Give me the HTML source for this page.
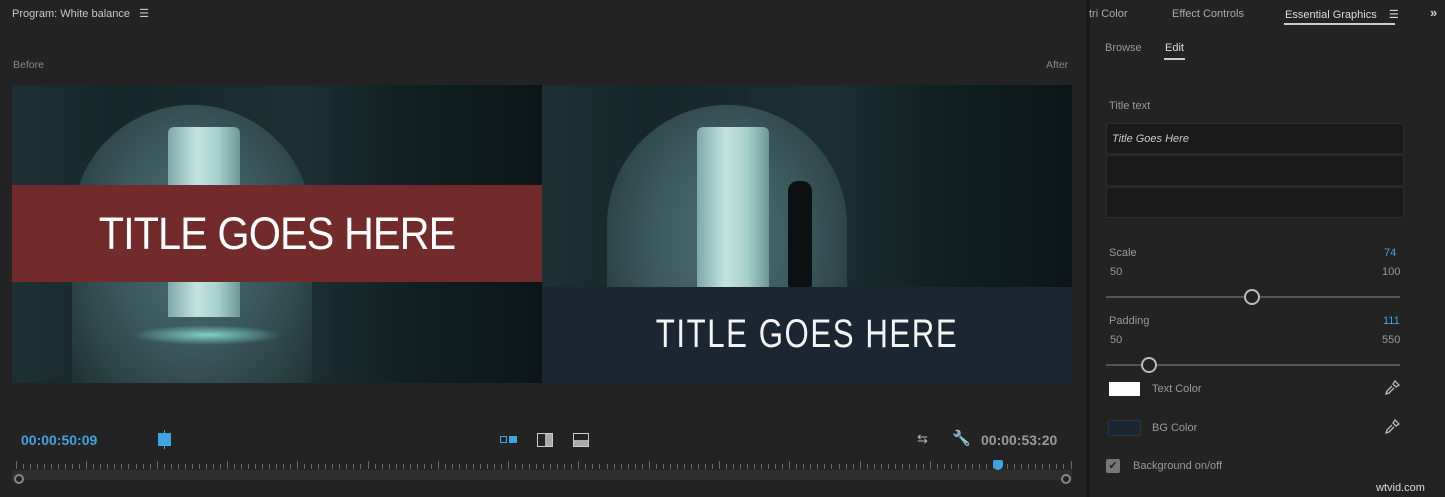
<!DOCTYPE html>
<html><head><style>
*{margin:0;padding:0;box-sizing:border-box}
body{width:1445px;height:497px;background:#232323;font-family:"Liberation Sans",sans-serif;color:#aaa;position:relative;overflow:hidden;font-size:12px}
.a{position:absolute}
.cave{position:absolute;top:85px;height:298px;width:530px;overflow:hidden;background:linear-gradient(90deg,#1d3033 0%,#16272a 20%,#1c2f32 55%,#112022 75%,#0c1618 100%)}
.arch{position:absolute;border-radius:50% 50% 0 0/40% 40% 0 0;background:radial-gradient(ellipse at 50% 45%,#4f6e72 0%,#3e5c60 40%,#2a4245 75%,rgba(28,47,50,0) 100%)}
.pillar{position:absolute;background:linear-gradient(90deg,#7fa9a9,#c5e3e0 40%,#a6d0cc 70%,#6d9796);border-radius:6px 6px 0 0}
.tk{position:absolute;top:0;width:1px;background:#666}
</style></head><body>
<div class="a" style="left:12px;top:7px;font-size:11px;color:#c8c8c8">Program: White balance&nbsp;&nbsp; ☰</div>
<div class="a" style="left:13px;top:59px;font-size:10.5px;color:#8a8a8a">Before</div>
<div class="a" style="left:1046px;top:59px;font-size:10.5px;color:#8a8a8a">After</div>

<div class="cave" style="left:12px">
  <div class="arch" style="left:60px;top:20px;width:240px;height:300px"></div>
  <div class="pillar" style="left:156px;top:42px;width:72px;height:190px"></div>
  <div class="a" style="left:120px;top:240px;width:150px;height:20px;border-radius:50%;background:radial-gradient(ellipse,#7fd0c8,rgba(60,120,140,0) 70%)"></div>
  <div class="a" style="left:0;top:100px;width:530px;height:97px;background:#722a2a"></div>
  <div class="a" style="left:-20px;top:123px;width:570px;text-align:center;font-size:45px;color:#fff;letter-spacing:-1px;transform:scaleX(0.92)">TITLE GOES HERE</div>
</div>
<div class="cave" style="left:542px;width:530px">
  <div class="arch" style="left:65px;top:20px;width:240px;height:300px"></div>
  <div class="pillar" style="left:155px;top:42px;width:72px;height:162px"></div>
  <div class="a" style="left:246px;top:96px;width:24px;height:106px;background:#0b1012;border-radius:10px 10px 2px 2px"></div>
  <div class="a" style="left:0;top:202px;width:530px;height:96px;background:#1b2632"></div>
  <div class="a" style="left:-20px;top:227px;width:570px;text-align:center;font-size:40px;color:#f4f4f4;letter-spacing:2px;transform:scaleX(0.78)">TITLE GOES HERE</div>
</div>

<div class="a" style="left:21px;top:432px;font-size:14px;font-weight:bold;color:#3fa4e0">00:00:50:09</div>
<div class="a" style="left:158px;top:433px;width:13px;height:13px;background:#3fa4e0"></div>
<div class="a" style="left:164px;top:430px;width:1px;height:19px;background:#3fa4e0"></div>
<div class="a" style="left:500px;top:436px;width:7px;height:7px;border:1px solid #3fa4e0"></div>
<div class="a" style="left:509px;top:436px;width:8px;height:7px;background:#3fa4e0"></div>
<div class="a" style="left:537px;top:433px;width:16px;height:14px;border:1px solid #ccc;background:linear-gradient(90deg,transparent 50%,#aaa 50%)"></div>
<div class="a" style="left:573px;top:433px;width:16px;height:14px;border:1px solid #ccc;background:linear-gradient(180deg,transparent 50%,#aaa 50%)"></div>
<div class="a" style="left:917px;top:431px;font-size:13px;color:#bbb">⇆</div>
<div class="a" style="left:952px;top:429px;font-size:15px;color:#ccc">🔧</div>
<div class="a" style="left:981px;top:432px;font-size:14px;font-weight:bold;color:#999">00:00:53:20</div>
<div class="a" style="left:12px;top:470px;width:1060px;height:10px;background:#2e2e2e"></div>
<div class="a" style="left:14px;top:474px;width:10px;height:10px;border:2px solid #888;border-radius:50%;background:#232323"></div>
<div class="a" style="left:1061px;top:474px;width:10px;height:10px;border:2px solid #888;border-radius:50%;background:#232323"></div>
<div id="ticks"></div>
<div class="a" style="left:993px;top:460px;width:10px;height:10px;background:#3fa4e0;border-radius:2px 2px 5px 5px"></div>

<div class="a" style="left:1086px;top:0;width:4px;height:497px;background:#1a1a1a"></div>
<div class="a" style="left:1089px;top:8px;font-size:11px;color:#aaa">tri Color</div>
<div class="a" style="left:1172px;top:8px;font-size:11px;color:#aaa">Effect Controls</div>
<div class="a" style="left:1285px;top:8px;font-size:11px;color:#ddd">Essential Graphics&nbsp;&nbsp;&nbsp;&nbsp;☰</div>
<div class="a" style="left:1284px;top:23px;width:111px;height:2px;background:#ccc"></div>
<div class="a" style="left:1430px;top:5px;font-size:13px;color:#ccc;font-weight:bold">»</div>
<div class="a" style="left:1105px;top:42px;font-size:11px;color:#999">Browse</div>
<div class="a" style="left:1165px;top:42px;font-size:11px;color:#ddd">Edit</div>
<div class="a" style="left:1164px;top:58px;width:21px;height:2px;background:#ccc"></div>
<div class="a" style="left:1109px;top:100px;font-size:11px;color:#999">Title text</div>
<div class="a" style="left:1106px;top:123px;width:298px;height:31px;background:#1a1a1a;border:1px solid #2e2e2e;border-radius:2px"></div>
<div class="a" style="left:1112px;top:133px;font-size:11px;font-style:italic;color:#ccc">Title Goes Here</div>
<div class="a" style="left:1106px;top:155px;width:298px;height:31px;background:#1a1a1a;border:1px solid #2e2e2e;border-radius:2px"></div>
<div class="a" style="left:1106px;top:187px;width:298px;height:31px;background:#1a1a1a;border:1px solid #2e2e2e;border-radius:2px"></div>

<div class="a" style="left:1109px;top:247px;font-size:11px;color:#999">Scale</div>
<div class="a" style="left:1384px;top:247px;font-size:11px;color:#3fa4e0">74</div>
<div class="a" style="left:1110px;top:266px;font-size:11px;color:#999">50</div>
<div class="a" style="left:1382px;top:266px;font-size:11px;color:#999">100</div>
<div class="a" style="left:1106px;top:296px;width:294px;height:2px;background:#555"></div>
<div class="a" style="left:1244px;top:289px;width:16px;height:16px;border:2px solid #bbb;border-radius:50%;background:#232323"></div>
<div class="a" style="left:1109px;top:315px;font-size:11px;color:#999">Padding</div>
<div class="a" style="left:1383px;top:315px;font-size:11px;color:#3fa4e0">111</div>
<div class="a" style="left:1110px;top:334px;font-size:11px;color:#999">50</div>
<div class="a" style="left:1382px;top:334px;font-size:11px;color:#999">550</div>
<div class="a" style="left:1106px;top:364px;width:294px;height:2px;background:#555"></div>
<div class="a" style="left:1141px;top:357px;width:16px;height:16px;border:2px solid #bbb;border-radius:50%;background:#232323"></div>
<div class="a" style="left:1109px;top:382px;width:31px;height:14px;background:#fff"></div>
<div class="a" style="left:1152px;top:383px;font-size:11px;color:#999">Text Color</div>
<div class="a" style="left:1108px;top:420px;width:33px;height:16px;background:#1b2632;border:1px solid #2a3440"></div>
<div class="a" style="left:1152px;top:422px;font-size:11px;color:#999">BG Color</div>
<svg class="a" style="left:1384px;top:380px" width="16" height="16" viewBox="0 0 16 16"><path d="M11 1 L15 5 L12 7 L9 4 Z M8 6 L3 11 L2 14 L5 13 L10 8" stroke="#bbb" stroke-width="1.3" fill="none"/></svg>
<svg class="a" style="left:1384px;top:419px" width="16" height="16" viewBox="0 0 16 16"><path d="M11 1 L15 5 L12 7 L9 4 Z M8 6 L3 11 L2 14 L5 13 L10 8" stroke="#bbb" stroke-width="1.3" fill="none"/></svg>
<div class="a" style="left:1106px;top:459px;width:14px;height:14px;background:#777;border-radius:2px;color:#222;font-size:11px;text-align:center;line-height:14px">✔</div>
<div class="a" style="left:1133px;top:460px;font-size:11px;color:#999">Background on/off</div>
<div class="a" style="left:1376px;top:482px;font-size:11px;color:#ddd">wtvid.com</div>
<script>
var t=document.getElementById('ticks'),h='';
for(var i=0;i<=150;i++){var x=16+i*7.03;h+='<div class="tk" style="left:'+x+'px;top:'+(i%10==0?461:464)+'px;height:'+(i%10==0?8:5)+'px"></div>';}
t.innerHTML=h;
</script>
</body></html>
